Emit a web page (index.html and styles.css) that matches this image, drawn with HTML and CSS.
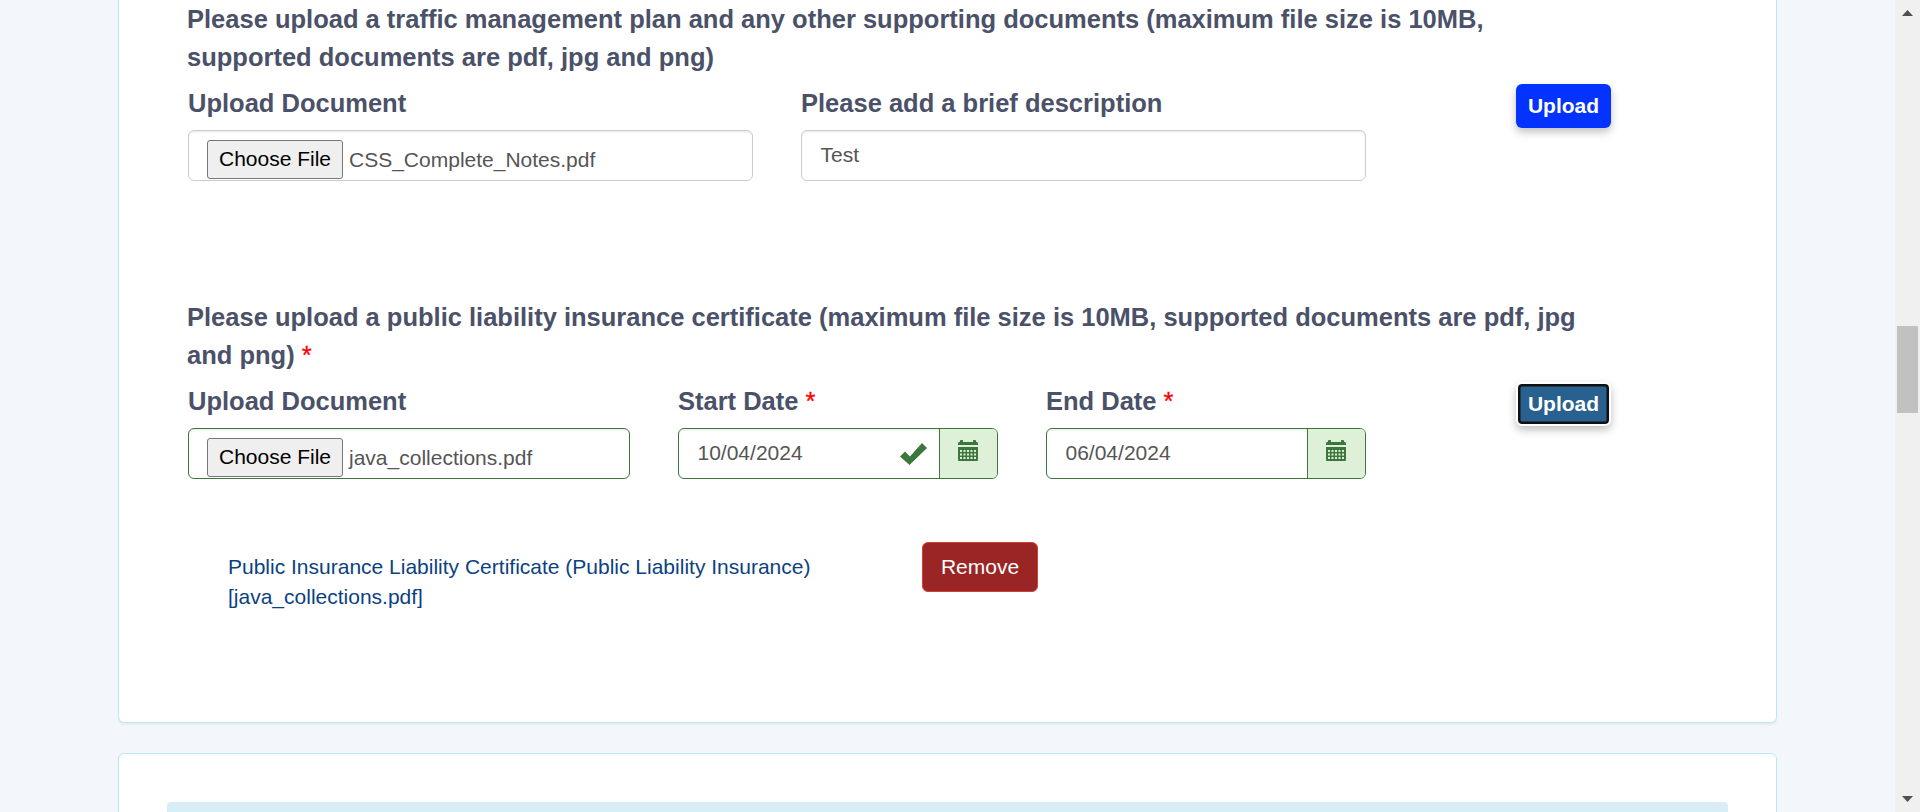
FILE: index.html
```html
<!DOCTYPE html>
<html lang="en">
<head>
<meta charset="utf-8">
<title>Upload documents</title>
<link rel="stylesheet" href="styles.css">
</head>
<body>
<svg width="0" height="0" class="defs">
  <symbol id="calendar" viewBox="0 0 20 21">
    <path d="M0 5V3.500Q0 2 1.500 2H2V1q0-1 1-1h1q1 0 1 1v1h10V1q0-1 1-1h1q1 0 1 1v1h.5Q20 2 20 3.500V5z"/>
    <path fill-rule="evenodd" d="M0 7h20v13q0 1-1 1H1q-1 0-1-1zM2 10v2h2v-2zM5.500 10v2h2v-2zM9 10v2h2v-2zM12.500 10v2h2v-2zM16 10v2h2v-2zM2 13.500v2h2v-2zM5.500 13.500v2h2v-2zM9 13.500v2h2v-2zM12.500 13.500v2h2v-2zM16 13.500v2h2v-2zM2 17v2h2v-2zM5.500 17v2h2v-2zM9 17v2h2v-2zM12.500 17v2h2v-2zM16 17v2h2v-2z"/>
  </symbol>
</svg>
<div class="page">
  <main class="content">
    <section class="card card-main">
      <div class="block">
        <h2 class="heading">Please upload a traffic management plan and any other supporting documents (maximum file size is 10MB,<br>supported documents are pdf, jpg and png)</h2>
        <div class="row row-two">
          <div class="field">
            <div class="label">Upload Document</div>
            <div class="input file"><span class="choose">Choose File</span><span class="filename">CSS_Complete_Notes.pdf</span></div>
          </div>
          <div class="field">
            <div class="label">Please add a brief description</div>
            <div class="input">Test</div>
          </div>
          <div class="action"><button class="upload">Upload</button></div>
        </div>
      </div>
      <div class="block">
        <h2 class="heading">Please upload a public liability insurance certificate (maximum file size is 10MB, supported documents are pdf, jpg<br>and png) <span class="req">*</span></h2>
        <div class="row row-three">
          <div class="field">
            <div class="label">Upload Document</div>
            <div class="input file valid"><span class="choose">Choose File</span><span class="filename">java_collections.pdf</span></div>
          </div>
          <div class="field">
            <div class="label">Start Date <span class="req">*</span></div>
            <div class="input valid date"><span class="value">10/04/2024</span><svg class="check" viewBox="0 0 27 22"><path d="M0 13.500 5 8.500l5 5L22 0l5 5L9.500 22z"/></svg><span class="addon"><svg class="cal"><use href="#calendar"/></svg></span></div>
          </div>
          <div class="field">
            <div class="label">End Date <span class="req">*</span></div>
            <div class="input valid date"><span class="value">06/04/2024</span><span class="addon"><svg class="cal"><use href="#calendar"/></svg></span></div>
          </div>
          <div class="action"><button class="upload focused">Upload</button></div>
        </div>
      </div>
      <div class="attachment">
        <a class="doc">Public Insurance Liability Certificate (Public Liability Insurance)<br>[java_collections.pdf]</a>
        <button class="remove">Remove</button>
      </div>
    </section>
    <section class="card card-next"><div class="banner"></div></section>
  </main>
  <div class="scrollbar">
    <svg class="arrow" viewBox="0 0 11 6"><path d="M5.500 0 11 6H0z"/></svg>
    <div class="thumb"></div>
    <svg class="arrow" viewBox="0 0 11 6"><path d="M0 0h11L5.500 6z"/></svg>
  </div>
</div>
</body>
</html>
```
FILE: styles.css
```css
* { box-sizing: border-box; }
body { margin: 0; font-family: "Liberation Sans", Arial, sans-serif; font-size: 21px; line-height: 30px; color: #555; background: #f3f7fc; overflow: hidden; }
.defs { display: block; height: 0; }
.page { display: flex; height: 812px; overflow: hidden; }
.content { flex: 1; padding-left: 118px; }
.card { width: 1659px; background: #fff; border: 1px solid #bce8f1; border-radius: 6px; box-shadow: 0 1.5px 1.5px rgba(0,0,0,.05); }
.card-main { height: 723px; border-top: 0; border-radius: 0 0 6px 6px; padding-left: 68px; }
.card-next { margin-top: 30px; height: 120px; padding: 48px 48px 0; }
.banner { height: 60px; border-radius: 4px; background: #d9edf7; }
.block { height: 298px; }
.heading { margin: 0; font-size: 25.5px; line-height: 38px; font-weight: bold; color: #4a5168; white-space: nowrap; }
.row { display: grid; padding: 8px 0 0 1px; }
.row-two { grid-template-columns: 565px 565px 95px; column-gap: 48px; }
.row-three { grid-template-columns: 442px 320px 320px 95px; column-gap: 48px; }
.row .action { width: 95px; margin-left: 102px; }
.label { height: 46px; font-size: 25.5px; line-height: 38px; font-weight: bold; color: #4a5168; white-space: nowrap; }
.req { color: red; font-weight: normal; -webkit-text-stroke: .3px red; }
.input { height: 51px; border: 1px solid #ccc; border-radius: 6px; padding: 9px 18.5px; line-height: 30px; background: #fff; box-shadow: inset 0 1.5px 1.5px rgba(0,0,0,.075); }
.valid { border-color: #3c763d; }
.file { padding: 9px 18px 0; display: flex; gap: 6px; }
.choose { width: 136px; height: 39px; border: 1px solid #767676; border-radius: 3px; background: #efefef; color: #000; text-align: center; line-height: 36px; }
.filename { line-height: 40px; }
.date { display: flex; padding-right: 0; padding-top: 0; padding-bottom: 0; align-items: stretch; }
.value { flex: 1; line-height: 48px; }
.check { width: 27px; height: 22px; margin: 14px 12px 0 0; fill: #3c763d; }
.addon { width: 58px; border-left: 1px solid #3c763d; border-radius: 0 5px 5px 0; background: #dff0d8; padding: 11px 0 0 18px; }
.cal { display: block; width: 20px; height: 21px; fill: #3c763d; }
button { font: inherit; padding: 0; border: 0; color: #fff; }
.upload { display: block; width: 95px; height: 44px; border-radius: 6px; background: #0433ff; font-weight: bold; line-height: 44px; box-shadow: 0 4px 8px rgba(0,0,0,.25); }
.focused { background: #286090; border: 2px solid #fff; line-height: 40px; box-shadow: inset 0 0 0 2.5px #101010, 0 4px 8px rgba(0,0,0,.25); }
.attachment { display: grid; grid-template-columns: 694px 116px; padding-left: 41px; margin-top: -54px; }
.doc { color: #0c4281; padding-top: 10px; }
.remove { height: 50px; border: 1px solid #d43f3a; border-radius: 6px; background: #992624; line-height: 48px; }
.scrollbar { width: 25px; background: #f0f0f0; display: flex; flex-direction: column; align-items: center; justify-content: space-between; padding: 10px 0; }
.arrow { width: 11px; height: 6px; fill: #505050; }
.thumb { width: 21px; height: 87px; background: #c1c1c1; margin-bottom: 74px; }
```
